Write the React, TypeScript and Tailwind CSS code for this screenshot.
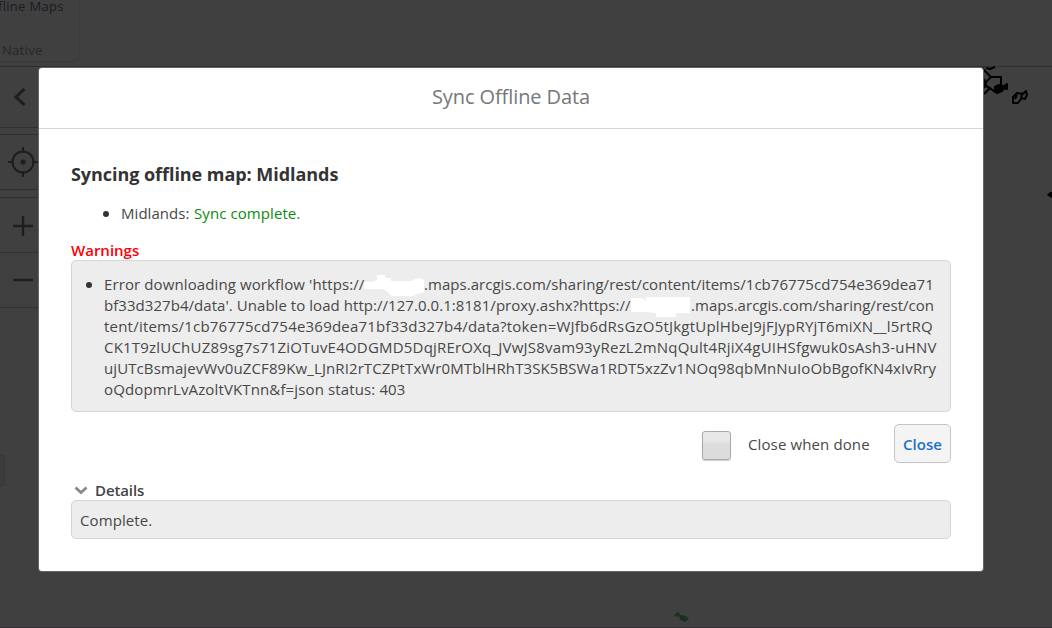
import React from "react";

function Ribbon() {
  return (
    <header className="flex h-[67px] shrink-0 items-start border-b border-[#303030]">
      <div className="flex h-[62px] w-20 flex-col justify-between whitespace-nowrap rounded-br-md border-b border-r border-[#3b3b3b]">
        <div className="-ml-[2px] -mt-[4px] text-[13px] leading-5 tracking-[0.3px] text-[#1c1a22]">fline Maps</div>
        <div className="mb-px ml-[2px] text-[13px] leading-5 tracking-[0.3px] text-[#272727]">Native</div>
      </div>
    </header>
  );
}

function MapTools() {
  return (
    <nav className="flex w-[39px] shrink-0 flex-col text-[#1e1e1e]">
      <div className="flex h-[61px] items-center border-b border-[#313131] pl-[13px]">
        <svg width="13" height="19" viewBox="0 0 13 19" fill="none" stroke="currentColor" strokeWidth="3">
          <path d="M11.5 1 3 9l8.500 8" />
        </svg>
      </div>
      <div className="mt-[6px] flex h-14 items-center border-y border-[#313131] pl-2">
        <svg width="31" height="30" viewBox="0 0 31 30" fill="none" stroke="currentColor" strokeWidth="2">
          <circle cx="15" cy="15" r="10.500" />
          <circle cx="15" cy="15" r="2.600" fill="currentColor" stroke="none" />
          <path d="M15 0v6M15 24v6M0 15h6M24 15h7" />
        </svg>
      </div>
      <div className="mt-[7px] flex h-14 items-center border-y border-[#313131] pl-[13px]">
        <svg className="mt-[2px]" width="20" height="20" viewBox="0 0 20 20" stroke="currentColor" strokeWidth="2.400">
          <path d="M10 0v20M0 10h20" />
        </svg>
      </div>
      <div className="flex h-[55px] items-center border-b border-[#313131] pl-[13px]">
        <svg width="20" height="20" viewBox="0 0 20 20" stroke="currentColor" strokeWidth="2.400">
          <path d="M0 10h20" />
        </svg>
      </div>
      <div className="mt-[147px] h-8 w-[5px] rounded-r border border-l-0 border-[#373737] bg-[#3c3c3c]" />
    </nav>
  );
}

function MapFeatures() {
  return (
    <>
      <svg className="absolute left-[980px] top-[62px]" width="72" height="140" viewBox="0 0 72 140" fill="none" stroke="#000" strokeWidth="2" strokeLinejoin="round">
        <path d="M2 6l5 5 4 4M6 6l4 1 5-2M11 15h10v8M11 15l-4 4-4 3M4 17l2 7 4 2-6 6M10 26l5 4 5-1 4-4M21 23l3 2" />
        <path d="m15 25 4-2 6 2-3 4-5 2-2-2zM3 19l3 2v3l-3 2z" fill="#000" />
        <path d="m23 25 4-3v5l-4-1" />
        <path d="M33 40v-5l4-4 5 1-1 5-3 4h-5zM41 31l2 1 3-3 1 4-2 4-4-1M37 33l-2 4" />
        <path d="m67 133 3-3h3v6l-3-1z" fill="#000" stroke="none" />
      </svg>
      <svg className="absolute left-[673px] top-[611px]" width="17" height="12" viewBox="0 0 17 12" fill="#1d301e">
        <path d="m1 4 4-3 3 3 5 1 3 3-4 3-5-2-1-4-2 1z" />
      </svg>
    </>
  );
}

const lineClass = "flex h-[21px] items-center whitespace-pre";

function Warnings() {
  return (
    <div className="mt-[-1px] flex h-[152px] rounded-[5px] border border-[#d5d5d5] bg-[#ededed] pl-[14px] pt-[13px]">
      <span className="mt-[8px] h-[6px] w-[6px] rounded-full bg-[#333]" />
      <div className="ml-[12px]">
        <div className={lineClass}>
          <span className="w-[260px] tracking-[0.11px]">Error downloading workflow 'https://</span>
          <svg className="w-[60px]" height="23" viewBox="0 0 60 23" fill="#fff">
            <path d="M0 9h8l5-2V2h8v3h6v3h20l7-3 7 2v12q-8 1-12 4H29q-4-1-5-4l-3-1-1-2H0z" />
          </svg>
          <span className="tracking-[0.04px]">.maps.arcgis.com/sharing/rest/content/items/1cb76775cd754e369dea71</span>
        </div>
        <div className={lineClass}>
          <span className="w-[527px] tracking-[0.05px]">bf33d327b4/data'. Unable to load http://127.0.0.1:8181/proxy.ashx?https://</span>
          <svg className="w-[60px]" height="23" viewBox="0 0 60 23" fill="#fff">
            <path d="M0 4h11l4 3V3h44v16H45v4H25v-4l-10-1H0z" />
          </svg>
          <span className="tracking-[0.03px]">.maps.arcgis.com/sharing/rest/con</span>
        </div>
        <div className={`${lineClass} tracking-[0.213px]`}>tent/items/1cb76775cd754e369dea71bf33d327b4/data?token=WJfb6dRsGzO5tJkgtUplHbeJ9jFJypRYjT6miXN__l5rtRQ</div>
        <div className={`${lineClass} tracking-[0.205px]`}>CK1T9zlUChUZ89sg7s71ZiOTuvE4ODGMD5DqjRErOXq_JVwJS8vam93yRezL2mNqQult4RjiX4gUIHSfgwuk0sAsh3-uHNV</div>
        <div className={`${lineClass} tracking-[0.1px]`}>ujUTcBsmajevWv0uZCF89Kw_LJnRI2rTCZPtTxWr0MTblHRhT3SK5BSWa1RDT5xzZv1NOq98qbMnNuIoObBgofKN4xIvRry</div>
        <div className={`${lineClass} tracking-[0.13px]`}>oQdopmrLvAzoltVKTnn&amp;f=json status: 403</div>
      </div>
    </div>
  );
}

function SyncDialog() {
  return (
    <section role="dialog" className="absolute left-[39px] top-[68px] flex h-[503px] w-[944px] flex-col rounded-[3px] bg-white text-[15px] text-[#484848] shadow-[0_0_0_1px_#666]">
      <h1 className="flex h-[61px] shrink-0 items-center justify-center border-b border-[#d5d5d5] pb-[3px] text-[20px] tracking-[-0.1px] text-[#777]">Sync Offline Data</h1>
      <div className="flex flex-col px-8 pt-[33px]">
        <h2 className="h-6 whitespace-nowrap text-[18px] font-bold leading-6 tracking-[-0.05px] text-[#333]">Syncing offline map: Midlands</h2>
        <div className="mt-[17px] flex h-[21px] items-center pl-[32px]">
          <span className="mr-[12px] h-[6px] w-[6px] rounded-full bg-[#333]" />
          <span className="w-[73px] whitespace-nowrap tracking-[0.05px]">Midlands:</span>
          <span className="tracking-[0.08px] text-[#0c8a0c]">Sync complete.</span>
        </div>
        <div className="mt-[16px] h-[21px] font-semibold leading-[21px] text-[#fb0007]">Warnings</div>
        <Warnings />
        <div className="mt-3 flex h-[39px] items-center justify-end">
          <span className="mt-[3px] h-[29px] w-[29px] rounded-[3px] border border-[#a9a9a9] bg-linear-to-b from-[#e8e8e8] from-30% to-[#dcdcdc] to-45% shadow-[0_1px_1px_#ccc]" />
          <span className="ml-[17px] w-[146px] whitespace-nowrap pt-[2px] tracking-[0.12px]">Close when done</span>
          <button className="h-[39px] w-[57px] rounded-[5px] border border-[#c5c5c5] bg-[#f4f4f4] pt-[2px] font-semibold text-[#1a72c6]">Close</button>
        </div>
        <div className="mt-[17px] flex h-[21px] items-center font-semibold tracking-[-0.1px] text-[#444]">
          <svg className="ml-[3px] mr-[7px]" width="14" height="10" viewBox="0 0 14 10" fill="none" stroke="#888" strokeWidth="2.800">
            <path d="m1.5 1.5 5.500 5 5.500-5" />
          </svg>
          Details
        </div>
        <div className="-mt-px flex h-[39px] items-center rounded-[5px] border border-[#d5d5d5] bg-[#ededed] pl-2 pt-[2px] tracking-[0.1px]">Complete.</div>
      </div>
    </section>
  );
}

export default function App() {
  return (
    <main className="relative flex h-[628px] w-[1052px] flex-col overflow-hidden border-b border-[#342f34] bg-[#404040] font-['Open_Sans','Noto_Sans',sans-serif]">
      <Ribbon />
      <MapTools />
      <MapFeatures />
      <SyncDialog />
    </main>
  );
}
